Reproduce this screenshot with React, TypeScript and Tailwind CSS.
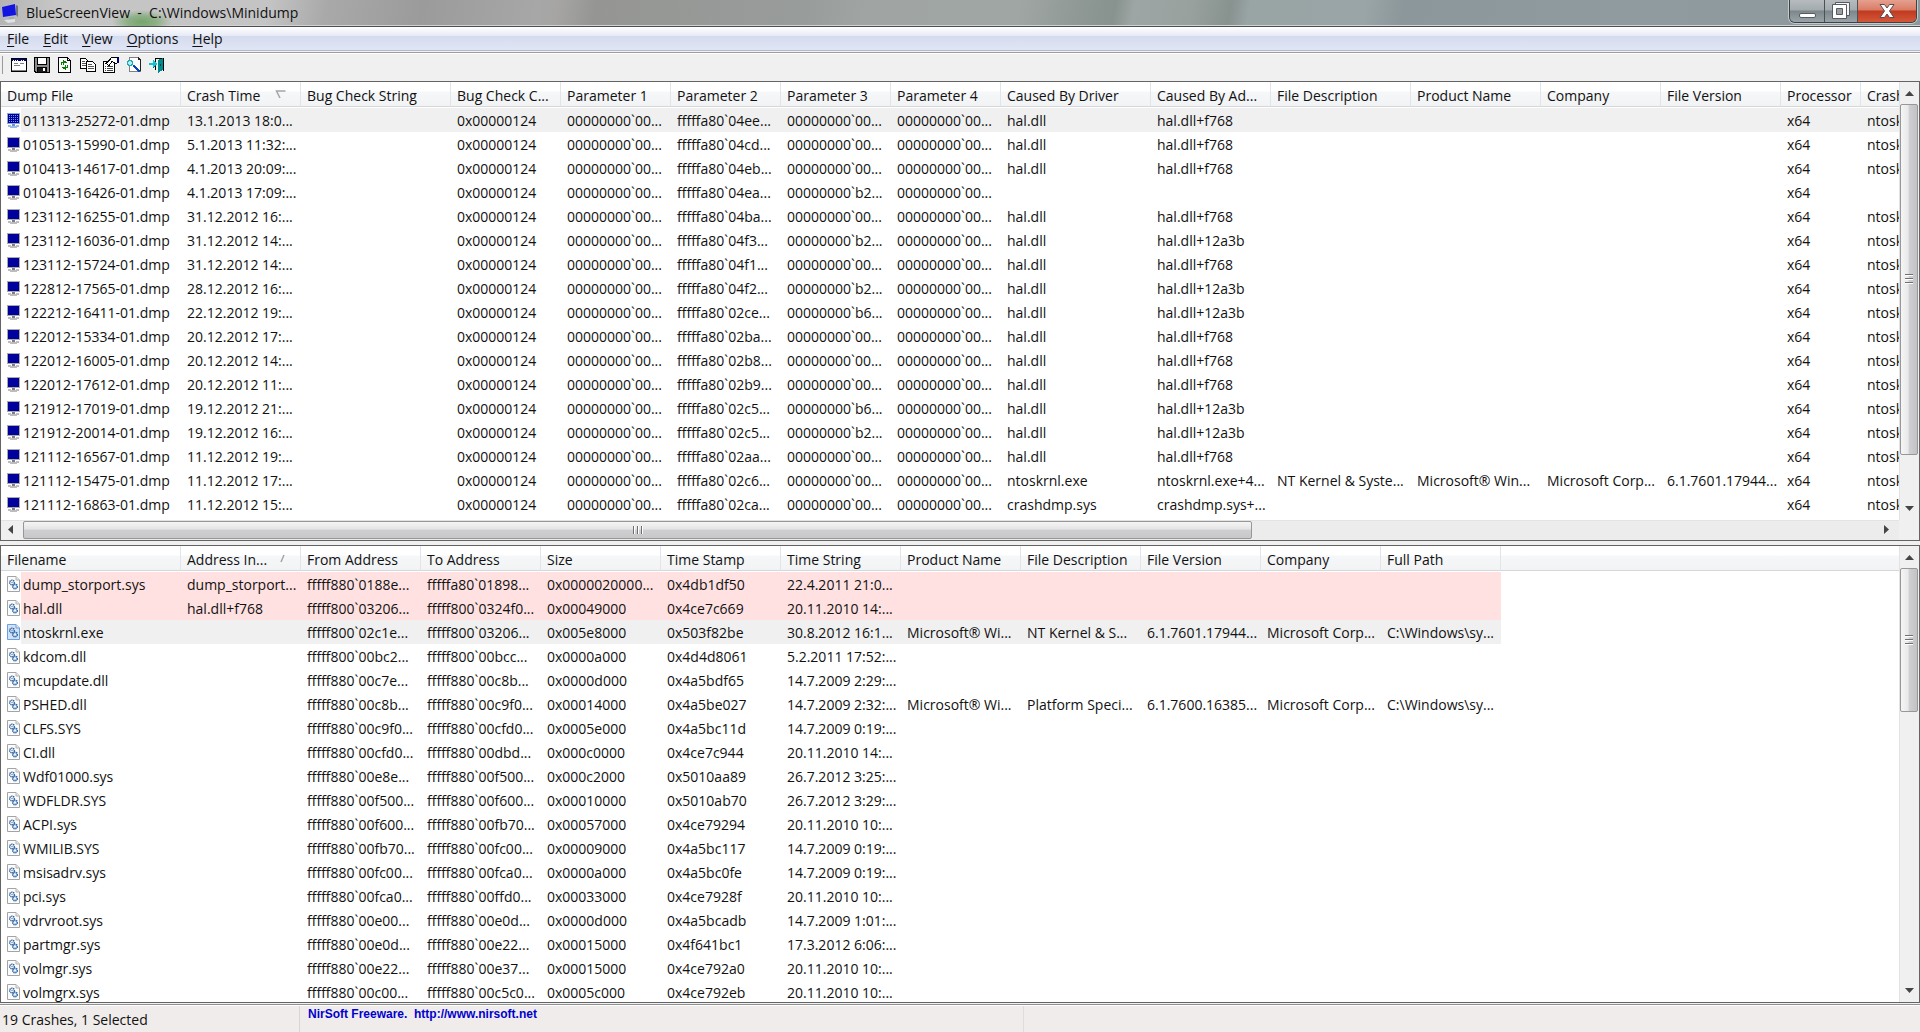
import type { ReactNode } from 'react';

type Tone = 'plain' | 'selected' | 'danger';

interface Column {
  label: string;
  width: string;
  sort?: 'asc' | 'desc';
}

interface Row {
  cells: string[];
  tone: Tone;
}

const CRASH_COLUMNS: Column[] = [
  { label: 'Dump File', width: 'w-[180px]' },
  { label: 'Crash Time', width: 'w-[120px]', sort: 'desc' },
  { label: 'Bug Check String', width: 'w-[150px]' },
  { label: 'Bug Check C...', width: 'w-[110px]' },
  { label: 'Parameter 1', width: 'w-[110px]' },
  { label: 'Parameter 2', width: 'w-[110px]' },
  { label: 'Parameter 3', width: 'w-[110px]' },
  { label: 'Parameter 4', width: 'w-[110px]' },
  { label: 'Caused By Driver', width: 'w-[150px]' },
  { label: 'Caused By Ad...', width: 'w-[120px]' },
  { label: 'File Description', width: 'w-[140px]' },
  { label: 'Product Name', width: 'w-[130px]' },
  { label: 'Company', width: 'w-[120px]' },
  { label: 'File Version', width: 'w-[120px]' },
  { label: 'Processor', width: 'w-[80px]' },
  { label: 'Crash', width: 'w-auto' },
];

const DRIVER_COLUMNS: Column[] = [
  { label: 'Filename', width: 'w-[180px]' },
  { label: 'Address In...', width: 'w-[120px]', sort: 'asc' },
  { label: 'From Address', width: 'w-[120px]' },
  { label: 'To Address', width: 'w-[120px]' },
  { label: 'Size', width: 'w-[120px]' },
  { label: 'Time Stamp', width: 'w-[120px]' },
  { label: 'Time String', width: 'w-[120px]' },
  { label: 'Product Name', width: 'w-[120px]' },
  { label: 'File Description', width: 'w-[120px]' },
  { label: 'File Version', width: 'w-[120px]' },
  { label: 'Company', width: 'w-[120px]' },
  { label: 'Full Path', width: 'w-[120px]' },
  { label: '', width: 'w-auto' },
];

// file, time, parameter 2 tail, parameter 3 tail, driver, address
const CRASHES = [
  ['011313-25272-01.dmp', '13.1.2013 18:0...', '04ee', '00', 'hal.dll', 'hal.dll+f768'],
  ['010513-15990-01.dmp', '5.1.2013 11:32:...', '04cd', '00', 'hal.dll', 'hal.dll+f768'],
  ['010413-14617-01.dmp', '4.1.2013 20:09:...', '04eb', '00', 'hal.dll', 'hal.dll+f768'],
  ['010413-16426-01.dmp', '4.1.2013 17:09:...', '04ea', 'b2', '', ''],
  ['123112-16255-01.dmp', '31.12.2012 16:...', '04ba', '00', 'hal.dll', 'hal.dll+f768'],
  ['123112-16036-01.dmp', '31.12.2012 14:...', '04f3', 'b2', 'hal.dll', 'hal.dll+12a3b'],
  ['123112-15724-01.dmp', '31.12.2012 14:...', '04f1', '00', 'hal.dll', 'hal.dll+f768'],
  ['122812-17565-01.dmp', '28.12.2012 16:...', '04f2', 'b2', 'hal.dll', 'hal.dll+12a3b'],
  ['122212-16411-01.dmp', '22.12.2012 19:...', '02ce', 'b6', 'hal.dll', 'hal.dll+12a3b'],
  ['122012-15334-01.dmp', '20.12.2012 17:...', '02ba', '00', 'hal.dll', 'hal.dll+f768'],
  ['122012-16005-01.dmp', '20.12.2012 14:...', '02b8', '00', 'hal.dll', 'hal.dll+f768'],
  ['122012-17612-01.dmp', '20.12.2012 11:...', '02b9', '00', 'hal.dll', 'hal.dll+f768'],
  ['121912-17019-01.dmp', '19.12.2012 21:...', '02c5', 'b6', 'hal.dll', 'hal.dll+12a3b'],
  ['121912-20014-01.dmp', '19.12.2012 16:...', '02c5', 'b2', 'hal.dll', 'hal.dll+12a3b'],
  ['121112-16567-01.dmp', '11.12.2012 19:...', '02aa', '00', 'hal.dll', 'hal.dll+f768'],
  ['121112-15475-01.dmp', '11.12.2012 17:...', '02c6', '00', 'ntoskrnl.exe', 'ntoskrnl.exe+4...'],
  ['121112-16863-01.dmp', '11.12.2012 15:...', '02ca', '00', 'crashdmp.sys', 'crashdmp.sys+...'],
];

const KERNEL_INFO = ['NT Kernel & Syste...', 'Microsoft® Win...', 'Microsoft Corp...', '6.1.7601.17944...'];

const CRASH_ROWS: Row[] = CRASHES.map(([file, time, p2, p3, driver, address], i) => ({
  tone: i === 0 ? 'selected' : 'plain',
  cells: [
    file,
    time,
    '',
    '0x00000124',
    '00000000`00...',
    `fffffa80\`${p2}...`,
    `00000000\`${p3}...`,
    '00000000`00...',
    driver,
    address,
    ...(driver === 'ntoskrnl.exe' ? KERNEL_INFO : ['', '', '', '']),
    'x64',
    driver ? 'ntosk' : '',
  ],
}));

const DRIVER_ROWS: Row[] = [
  { tone: 'danger', cells: ['dump_storport.sys', 'dump_storport...', 'fffff880`0188e...', 'fffffa80`01898...', '0x0000020000...', '0x4db1df50', '22.4.2011 21:0...'] },
  { tone: 'danger', cells: ['hal.dll', 'hal.dll+f768', 'fffff800`03206...', 'fffff800`0324f0...', '0x00049000', '0x4ce7c669', '20.11.2010 14:...'] },
  { tone: 'selected', cells: ['ntoskrnl.exe', '', 'fffff800`02c1e...', 'fffff800`03206...', '0x005e8000', '0x503f82be', '30.8.2012 16:1...', 'Microsoft® Wi...', 'NT Kernel & S...', '6.1.7601.17944...', 'Microsoft Corp...', 'C:\\Windows\\sy...'] },
  { tone: 'plain', cells: ['kdcom.dll', '', 'fffff800`00bc2...', 'fffff800`00bcc...', '0x0000a000', '0x4d4d8061', '5.2.2011 17:52:...'] },
  { tone: 'plain', cells: ['mcupdate.dll', '', 'fffff880`00c7e...', 'fffff880`00c8b...', '0x0000d000', '0x4a5bdf65', '14.7.2009 2:29:...'] },
  { tone: 'plain', cells: ['PSHED.dll', '', 'fffff880`00c8b...', 'fffff880`00c9f0...', '0x00014000', '0x4a5be027', '14.7.2009 2:32:...', 'Microsoft® Wi...', 'Platform Speci...', '6.1.7600.16385...', 'Microsoft Corp...', 'C:\\Windows\\sy...'] },
  { tone: 'plain', cells: ['CLFS.SYS', '', 'fffff880`00c9f0...', 'fffff880`00cfd0...', '0x0005e000', '0x4a5bc11d', '14.7.2009 0:19:...'] },
  { tone: 'plain', cells: ['CI.dll', '', 'fffff880`00cfd0...', 'fffff880`00dbd...', '0x000c0000', '0x4ce7c944', '20.11.2010 14:...'] },
  { tone: 'plain', cells: ['Wdf01000.sys', '', 'fffff880`00e8e...', 'fffff880`00f500...', '0x000c2000', '0x5010aa89', '26.7.2012 3:25:...'] },
  { tone: 'plain', cells: ['WDFLDR.SYS', '', 'fffff880`00f500...', 'fffff880`00f600...', '0x00010000', '0x5010ab70', '26.7.2012 3:29:...'] },
  { tone: 'plain', cells: ['ACPI.sys', '', 'fffff880`00f600...', 'fffff880`00fb70...', '0x00057000', '0x4ce79294', '20.11.2010 10:...'] },
  { tone: 'plain', cells: ['WMILIB.SYS', '', 'fffff880`00fb70...', 'fffff880`00fc00...', '0x00009000', '0x4a5bc117', '14.7.2009 0:19:...'] },
  { tone: 'plain', cells: ['msisadrv.sys', '', 'fffff880`00fc00...', 'fffff880`00fca0...', '0x0000a000', '0x4a5bc0fe', '14.7.2009 0:19:...'] },
  { tone: 'plain', cells: ['pci.sys', '', 'fffff880`00fca0...', 'fffff880`00ffd0...', '0x00033000', '0x4ce7928f', '20.11.2010 10:...'] },
  { tone: 'plain', cells: ['vdrvroot.sys', '', 'fffff880`00e00...', 'fffff880`00e0d...', '0x0000d000', '0x4a5bcadb', '14.7.2009 1:01:...'] },
  { tone: 'plain', cells: ['partmgr.sys', '', 'fffff880`00e0d...', 'fffff880`00e22...', '0x00015000', '0x4f641bc1', '17.3.2012 6:06:...'] },
  { tone: 'plain', cells: ['volmgr.sys', '', 'fffff880`00e22...', 'fffff880`00e37...', '0x00015000', '0x4ce792a0', '20.11.2010 10:...'] },
  { tone: 'plain', cells: ['volmgrx.sys', '', 'fffff880`00c00...', 'fffff880`00c5c0...', '0x0005c000', '0x4ce792eb', '20.11.2010 10:...'] },
];

const TONES: Record<Tone, string> = {
  plain: 'bg-white',
  selected: 'bg-[#f0f0f0]',
  danger: 'bg-[#ffe1e1]',
};

const AppIcon = () => (
  <svg width="20" height="20" viewBox="0 0 20 20" aria-hidden="true">
    <path d="M1 4 16 0 18 12 4 16Z" fill="#b9bcc2" />
    <path d="M2 4 15 1 16 12 3 14Z" fill="#1414e0" />
    <path d="M16 2 18 3 18 14 16 12Z" fill="#70757c" />
    <path d="M9 14 14 14 15 18 8 20Z" fill="#a9adb2" />
    <path d="M4 17 15 16 15 19 8 20Z" fill="#dfe1e4" />
  </svg>
);

const MonitorIcon = ({ selected }: { selected: boolean }) => (
  <svg width="13" height="15" viewBox="0 0 13 15" shapeRendering="crispEdges" aria-hidden="true">
    <path d="M0 0H13V11H0Z" fill={selected ? '#8ea9d8' : '#a9a9a9'} />
    <path d="M1 1H12V10H1Z" fill="#00009c" />
    {selected && (
      <path
        d="M2 2.500h1M4 2.500h1M6 2.500h1M8 2.500h1M10 2.500h1M2 4.500h1M4 4.500h1M6 4.500h1M8 4.500h1M10 4.500h1M2 6.500h1M4 6.500h1M6 6.500h1M8 6.500h1M10 6.500h1M2 8.500h1M4 8.500h1M6 8.500h1M8 8.500h1M10 8.500h1"
        stroke="#6f9be8"
      />
    )}
    <path d="M5 11H8V13H5Z" fill={selected ? '#6d93cf' : '#7d7d7d'} />
    <path d="M1 12H4V13H9V12H12V14H10V15H3V14H1Z" fill={selected ? '#9dbbe6' : '#bdbdbd'} />
  </svg>
);

const ModuleIcon = ({ selected }: { selected: boolean }) => (
  <svg width="13" height="16" viewBox="0 0 13 16" aria-hidden="true">
    <path d="M.5.5H9L12.500 4V15.500H.5Z" fill={selected ? '#cfe2fa' : '#fbfbfb'} stroke={selected ? '#6d9fdc' : '#a3a3a3'} />
    <path d="M9 .5V4H12.500" fill="#e6e6e6" stroke={selected ? '#6d9fdc' : '#b5b5b5'} />
    <circle cx="5" cy="6.500" r="2.300" fill="none" stroke="#2c609f" strokeWidth="1.500" strokeDasharray="1.200 .6" />
    <circle cx="8" cy="10.500" r="2.300" fill="#bcd4ee" stroke="#2c609f" strokeWidth="1.500" strokeDasharray="1.200 .6" />
    <circle cx="5" cy="6.500" r=".8" fill="#6f9bc9" />
    <circle cx="8" cy="10.500" r=".8" fill="#fff" />
  </svg>
);

const ToolIcon = ({ children }: { children: ReactNode }) => (
  <svg width="16" height="16" viewBox="0 0 16 16" shapeRendering="crispEdges" aria-hidden="true">
    {children}
  </svg>
);

const TOOLS: { name: string; icon: ReactNode }[] = [
  {
    name: 'Advanced Options',
    icon: (
      <>
        <path d="M0 1H16V15H0Z" fill="#000" />
        <path d="M1 2H15V14H1Z" fill="#fff" />
        <path d="M1 2H15V4H1Z" fill="#00007b" />
        <path d="M2 3.500h1M4 3.500h1M6 3.500h1M10 3.500h1M12 3.500h1" stroke="#fff" />
        <path d="M3 6.500h4M9 6.500h4M3 8.500h6M1 13.500h14" stroke="#808080" />
      </>
    ),
  },
  {
    name: 'Save',
    icon: (
      <>
        <path d="M0 0H16V16H1L0 15Z" fill="#000" />
        <path d="M1 1H3V8H13V1H15V15H13V10H3V15H2L1 14Z" fill="#8c8c8c" />
        <path d="M4 1H12V7H4Z" fill="#fff" />
        <path d="M4 11H12V15H4Z" fill="#1b1b1b" />
        <path d="M9 11H11V14H9Z" fill="#fff" />
      </>
    ),
  },
  {
    name: 'Refresh',
    icon: (
      <>
        <path d="M1.500.5H10.500L13.500 3.500V15.500H1.500Z" fill="#fff" stroke="#000" />
        <path d="M10.500 1V3.500H13" fill="none" stroke="#000" />
        <path d="M4 8V5H6V3H7V4H9V5H10V6H7V8H6V6H5V8Z" fill="#008200" />
        <path d="M11 8V11H9V13H8V12H6V11H5V10H8V8H9V10H10V8Z" fill="#008200" />
      </>
    ),
  },
  {
    name: 'Copy Selected Items',
    icon: (
      <>
        <path d="M.5 1.500H5.500L8.500 4.500V11.500H.5Z" fill="#fff" stroke="#000" />
        <path d="M2 4.500h3M2 6.500h5M2 8.500h5" stroke="#555" />
        <path d="M6.500 4.500H12.500L15.500 7.500V14.500H6.500Z" fill="#fff" stroke="#000" />
        <path d="M8 7.500h4M8 9.500h6M8 11.500h6" stroke="#555" />
      </>
    ),
  },
  {
    name: 'Properties',
    icon: (
      <>
        <path d="M.5 4.500H11.500V15.500H.5Z" fill="#fff" stroke="#000" />
        <path d="M2 9.500h1M4 9.500h6M2 11.500h1M4 11.500h6M2 13.500h1M4 13.500h6" stroke="#444" />
        <path d="M3 6.500L7 2.500L8.500.5H15.500V5.500L13 6.500L9 4.500L6 8.500Z" fill="#fff" stroke="#000" />
        <path d="M14 1h2v5h-2z" fill="#00007b" />
      </>
    ),
  },
  {
    name: 'Find',
    icon: (
      <>
        <path d="M3.500.5H12.500L14.500 2.500V14.500H3.500Z" fill="#fff" stroke="#808080" />
        <path d="M12 0h1v1h1v1h1v12h-1V3h-2z" fill="#222" />
        <path d="M2 3H6V4H7V8H6V9H2V8H1V4H2Z" fill="#2aa5b5" />
        <path d="M3 4H5V5H6V7H5V8H3V7H2V5H3Z" fill="#a9f3f7" />
        <path d="M7 8H9V9H10V10H11V11H12V12H13V13H14V15H12V14H11V13H10V12H9V11H8V10H7Z" fill="#0a46b4" />
      </>
    ),
  },
  {
    name: 'Exit',
    icon: (
      <>
        <path d="M6 1H15V14H14V2H7V13H6Z" fill="#000" />
        <path d="M9 3 14 1V13L9 16Z" fill="#008c8c" />
        <path d="M11 7h1v2h-1z" fill="#003c3c" />
        <path d="M0 6H4V3H5V4H6V5H7V6H8V8H7V9H6V10H5V11H4V8H0Z" fill="#12c4d2" />
        <path d="M4 10h1v1H4zM5 9h1v1H5zM6 8h1v1H6z" fill="#006f7b" />
      </>
    ),
  },
];

const MENUS = ['File', 'Edit', 'View', 'Options', 'Help'];

const TitleBar = () => (
  <header className="flex h-[27px] shrink-0 items-start border-b border-[#4c4f50] bg-[linear-gradient(100deg,#b4b4b4_0%,#c6c6c6_3%,#c4c4c4_14%,#a9a9a9_17%,#9b9b9b_22%,#a7a7a7_28%,#a6a5a4_29%,#959694_31%,#989c9a_42%,#a0a5a3_45%,#a0a6a4_53%,#8b9591_57%,#88928e_58%,#9da6a4_59%,#98a19e_62%,#88928f_64%,#99a4a5_65%,#99a5a6_71%,#8c979b_73%,#909b9f_85%,#8d989d_100%)] shadow-[inset_0_-1px_0_#cfd3d3]">
    <div className="flex h-[26px] items-center bg-[radial-gradient(ellipse_30px_12px_at_142px_22px,#74a56c_0%,#8fb088_50%,transparent_100%)] pr-10">
      <AppIcon />
      <h1 className="ml-1.5 whitespace-pre leading-6">BlueScreenView  -  C:\Windows\Minidump</h1>
    </div>
    <div className="mr-[3px] ml-auto flex h-[23px] overflow-hidden rounded-b-md border border-t-0 border-[#3e4446] shadow-[0_0_0_1px_#c3cacd]">
      <button type="button" aria-label="Minimize" className="flex w-[35px] items-center justify-center border-r border-[#4b5254] bg-[linear-gradient(#b5bbbe_0%,#a4abae_45%,#7d878b_50%,#9aa4a8_100%)] pt-2">
        <span className="h-[5px] w-[17px] rounded-xs border border-[#555b60] bg-white" />
      </button>
      <button type="button" aria-label="Restore" className="flex w-[33px] items-center justify-center border-r border-[#4b5254] bg-[linear-gradient(#b5bbbe_0%,#a4abae_45%,#7d878b_50%,#9aa4a8_100%)] pb-0.5">
        <svg width="18" height="17" viewBox="0 0 18 17" aria-hidden="true">
          <path d="M3.500.5H17.500V13.500H3.500Z" fill="#f4f4f4" stroke="#555b60" />
          <path d="M.5 2.500H14.500V16.500H.5Z" fill="#fff" stroke="#555b60" />
          <path d="M4.500 6.500H10.500V12.500H4.500Z" fill="#98a0a4" stroke="#555b60" />
        </svg>
      </button>
      <button type="button" aria-label="Close" className="flex w-[58px] items-center justify-center bg-[linear-gradient(#e5a08f_0%,#d97c66_45%,#c03a20_50%,#d4573a_100%)]">
        <svg width="16" height="14" viewBox="0 0 16 14" aria-hidden="true">
          <path d="M1 .5H5.500L8 4 10.500.5H15L10.500 7 15 13.500H10.500L8 10 5.500 13.500H1L5.500 7Z" fill="#fff" stroke="#5a4a50" />
        </svg>
      </button>
    </div>
  </header>
);

const MenuBar = () => (
  <nav className="flex h-[27px] shrink-0 items-center border-b border-white bg-[linear-gradient(#ffffff_0px,#e6eaf6_9px,#d4dbee_9px,#e1e6f6_23px,#b4b8c4_23px,#b4b8c4_24px,#f2f3f8_24px,#f2f3f8_25px,#9c9c9c_25px)] pb-0.5">
    {MENUS.map((menu) => (
      <button key={menu} type="button" className="px-[7px] leading-6">
        <span className="underline underline-offset-2">{menu[0]}</span>
        {menu.slice(1)}
      </button>
    ))}
  </nav>
);

const ToolBar = () => (
  <div role="toolbar" aria-label="Actions" className="flex h-[27px] shrink-0 items-center bg-[#f0f0f0] pb-1.5 pl-0.5">
    <span className="mr-1 h-[18px] w-px bg-[#9a9a9a]" />
    {TOOLS.map(({ name, icon }) => (
      <button key={name} type="button" aria-label={name} className="flex h-5 w-[23px] items-center justify-center">
        <ToolIcon>{icon}</ToolIcon>
      </button>
    ))}
  </div>
);

const SortMark = ({ dir }: { dir: 'asc' | 'desc' }) => (
  <svg width="11" height="9" viewBox="0 0 11 9" aria-hidden="true">
    {dir === 'desc' ? (
      <path d="M10.500 1H1.500L5 8" fill="none" stroke="#a5a5a5" strokeWidth="1.500" />
    ) : (
      <path d="M6 8 9 1" fill="none" stroke="#a5a5a5" strokeWidth="1.500" />
    )}
  </svg>
);

interface ListProps {
  label: string;
  columns: Column[];
  rows: Row[];
  icon: (selected: boolean) => ReactNode;
}

const ListView = ({ label, columns, rows, icon }: ListProps) => (
  <div className="min-h-0 min-w-0 flex-1 overflow-hidden bg-white">
    <table aria-label={label} className="w-full min-w-[1700px] table-fixed border-separate border-spacing-0">
      <thead>
        <tr>
          {columns.map((col, i) => (
            <th key={i} className={`${col.width} h-[26px] border-b border-white p-0 font-normal`}>
              <div
                className={`flex h-[25px] items-center overflow-hidden border-b border-[#d5d7d9] bg-[linear-gradient(#ffffff_0px,#ffffff_9px,#f6f7f9_10px,#f1f3f5_24px)] ${
                  i < columns.length - 1 ? 'border-r border-r-[#e2e4e7]' : ''
                }`}
              >
                {col.label && (
                  <button type="button" className="flex flex-1 items-center justify-between pt-1 pl-1.5 whitespace-nowrap">
                    {col.label}
                    {col.sort && (
                      <span className="mr-3.5 mb-1">
                        <SortMark dir={col.sort} />
                      </span>
                    )}
                  </button>
                )}
              </div>
            </th>
          ))}
        </tr>
      </thead>
      <tbody>
        {rows.map((row) => (
          <tr key={row.cells[0]}>
            {columns.map((col, i) => {
              const text = row.cells[i] ?? '';
              if (i === 0) {
                return (
                  <td key={i} className="h-6 p-0">
                    <div className="flex h-6 items-center pl-1.5">
                      <span className="w-3.5">{icon(row.tone === 'selected')}</span>
                      <span className={`h-6 flex-1 pt-0.5 pl-0.5 leading-[22px] whitespace-nowrap ${TONES[row.tone]}`}>{text}</span>
                    </div>
                  </td>
                );
              }
              return (
                <td
                  key={i}
                  className={`h-6 overflow-hidden p-0 pt-0.5 pl-1.5 leading-[22px] whitespace-nowrap ${col.label ? TONES[row.tone] : 'bg-white'}`}
                >
                  {text}
                </td>
              );
            })}
          </tr>
        ))}
      </tbody>
    </table>
  </div>
);

const Arrow = ({ d }: { d: string }) => (
  <svg width="9" height="9" viewBox="0 0 9 9" aria-hidden="true">
    <path d={d} fill="#454545" />
  </svg>
);

// thumb is the share of the track it covers, in percent
const VerticalScroll = ({ thumb }: { thumb: number }) => (
  <div className="flex w-5 shrink-0 flex-col items-center border-l border-[#e3e3e3] bg-[#f0f0f0] pr-px">
    <button type="button" aria-label="Scroll up" className="flex h-[22px] w-full shrink-0 items-center justify-center">
      <Arrow d="M0 7 4.500 2 9 7Z" />
    </button>
    <div className="flex w-full min-h-0 flex-1 flex-col">
      <div
        className="flex w-full flex-col items-center justify-center gap-0.5 rounded-xs border border-[#979797] bg-[linear-gradient(90deg,#f5f5f5_0%,#e9e9eb_45%,#d0d0d3_50%,#c2c2c6_100%)]"
        style={{ height: `${thumb}%` }}
      >
        <span className="h-0.5 w-2 border-t border-[#6f6f6f] bg-white" />
        <span className="h-0.5 w-2 border-t border-[#6f6f6f] bg-white" />
        <span className="h-0.5 w-2 border-t border-[#6f6f6f] bg-white" />
      </div>
    </div>
    <button type="button" aria-label="Scroll down" className="flex h-[22px] w-full shrink-0 items-center justify-center pb-0.5">
      <Arrow d="M0 2H9L4.500 7Z" />
    </button>
  </div>
);

const HorizontalScroll = ({ thumb }: { thumb: number }) => (
  <div className="flex h-5 shrink-0 bg-[#ececec]">
    <div className="flex min-w-0 flex-1 border-t border-[#e3e3e3]">
      <button type="button" aria-label="Scroll left" className="flex w-[22px] shrink-0 items-center justify-center bg-[#f0f0f0] pr-1 pb-0.5">
        <Arrow d="M7 0V9L2 4.500Z" />
      </button>
      <div className="min-w-0 flex-1">
        <div
          className="flex h-[18px] items-center justify-center gap-0.5 rounded-xs border border-[#979797] bg-[linear-gradient(#f5f5f5_0%,#e4e4e6_45%,#cfcfd2_50%,#c8c8cb_100%)]"
          style={{ width: `${thumb}%` }}
        >
          <span className="h-2 w-0.5 border-l border-[#6f6f6f] bg-white" />
          <span className="h-2 w-0.5 border-l border-[#6f6f6f] bg-white" />
          <span className="h-2 w-0.5 border-l border-[#6f6f6f] bg-white" />
        </div>
      </div>
      <button type="button" aria-label="Scroll right" className="flex w-[22px] shrink-0 items-center justify-center pr-1 pb-0.5">
        <Arrow d="M2 0V9L7 4.500Z" />
      </button>
    </div>
    <div className="w-5 bg-[#f0f0f0]" />
  </div>
);

const StatusBar = () => (
  <footer className="flex h-[29px] shrink-0 flex-col bg-[#f0eceb]">
    <div className="h-[3px] shrink-0 border-y border-t-[#f0f0f0] border-b-white bg-[#8f9290]" />
    <div className="flex flex-1">
      <p className="w-[300px] border-r border-[#d8d6d5] pl-0.5 leading-7">19 Crashes, 1 Selected</p>
      <p className="w-[724px] border-r border-[#dfdddc] pl-2 font-['Liberation_Sans'] text-[12px] leading-4 font-bold whitespace-pre">
        <a href="http://www.nirsoft.net" className="text-[#0000d0]">
          NirSoft Freeware.  http://www.nirsoft.net
        </a>
      </p>
    </div>
  </footer>
);

export default function App() {
  return (
    <div className="flex h-screen flex-col overflow-hidden bg-[#f0f0f0] font-['Open_Sans',sans-serif] text-[14px] leading-5 text-[#111]">
      <TitleBar />
      <MenuBar />
      <ToolBar />
      <main className="flex min-h-0 flex-1 flex-col gap-1">
        <section className="flex min-h-0 flex-[460_1_0px] flex-col border border-[#646464]">
          <div className="flex min-h-0 flex-1">
            <ListView label="Crashes" columns={CRASH_COLUMNS} rows={CRASH_ROWS} icon={(selected) => <MonitorIcon selected={selected} />} />
            <VerticalScroll thumb={89} />
          </div>
          <HorizontalScroll thumb={66.3} />
        </section>
        <section className="flex min-h-0 flex-[458_1_0px] border border-[#646464]">
          <ListView label="Drivers" columns={DRIVER_COLUMNS} rows={DRIVER_ROWS} icon={(selected) => <ModuleIcon selected={selected} />} />
          <VerticalScroll thumb={35} />
        </section>
      </main>
      <StatusBar />
    </div>
  );
}
